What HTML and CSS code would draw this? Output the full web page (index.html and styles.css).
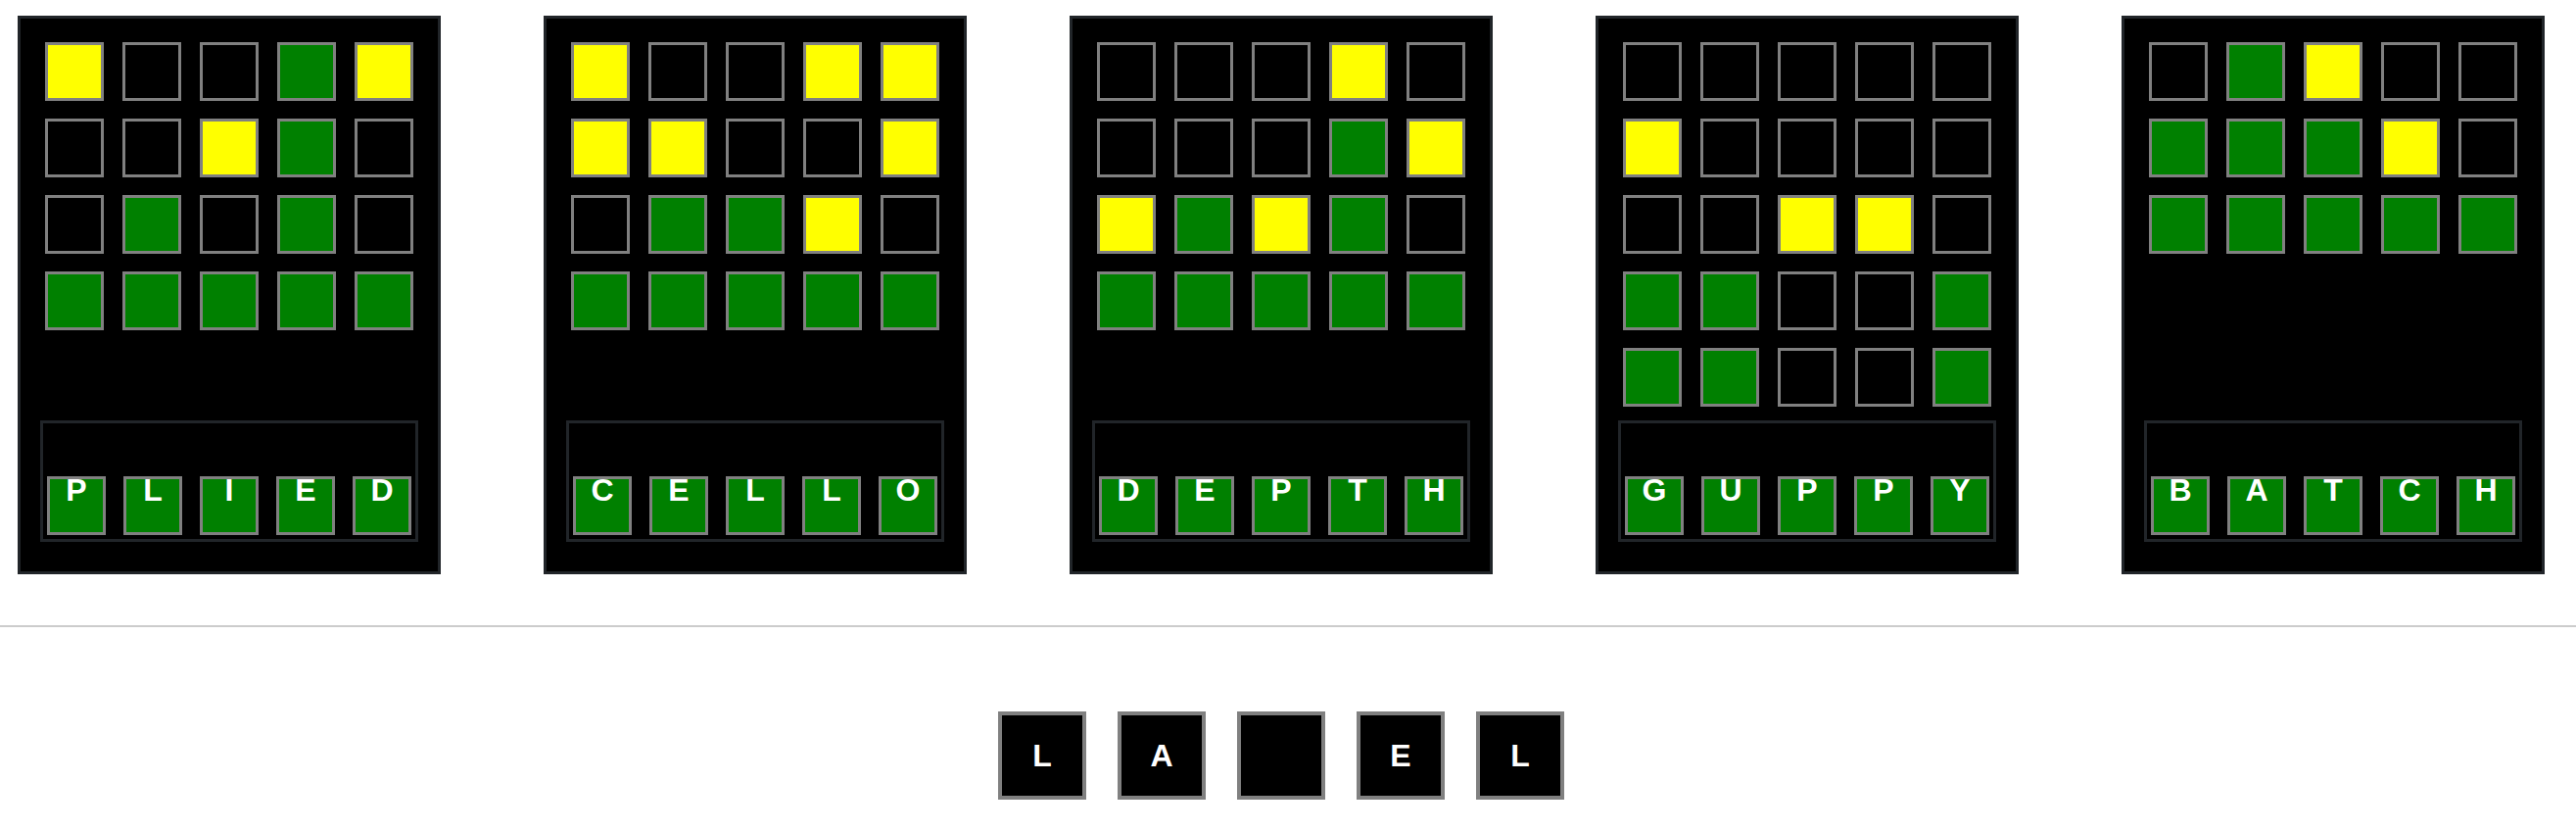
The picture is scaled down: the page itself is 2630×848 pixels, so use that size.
FILE: index.html
```html
<!DOCTYPE html>
<html>
<head>
<meta charset="utf-8">
<link rel="stylesheet" href="styles.css">
</head>
<body>
<div class="boards">
  <div class="card">
    <div class="guesses">
      <div class="row"><div class="tile y"></div><div class="tile"></div><div class="tile"></div><div class="tile g"></div><div class="tile y"></div></div>
      <div class="row"><div class="tile"></div><div class="tile"></div><div class="tile y"></div><div class="tile g"></div><div class="tile"></div></div>
      <div class="row"><div class="tile"></div><div class="tile g"></div><div class="tile"></div><div class="tile g"></div><div class="tile"></div></div>
      <div class="row"><div class="tile g"></div><div class="tile g"></div><div class="tile g"></div><div class="tile g"></div><div class="tile g"></div></div>
    </div>
    <div class="answer"><div class="atile">P</div><div class="atile">L</div><div class="atile">I</div><div class="atile">E</div><div class="atile">D</div></div>
  </div>
  <div class="card">
    <div class="guesses">
      <div class="row"><div class="tile y"></div><div class="tile"></div><div class="tile"></div><div class="tile y"></div><div class="tile y"></div></div>
      <div class="row"><div class="tile y"></div><div class="tile y"></div><div class="tile"></div><div class="tile"></div><div class="tile y"></div></div>
      <div class="row"><div class="tile"></div><div class="tile g"></div><div class="tile g"></div><div class="tile y"></div><div class="tile"></div></div>
      <div class="row"><div class="tile g"></div><div class="tile g"></div><div class="tile g"></div><div class="tile g"></div><div class="tile g"></div></div>
    </div>
    <div class="answer"><div class="atile">C</div><div class="atile">E</div><div class="atile">L</div><div class="atile">L</div><div class="atile">O</div></div>
  </div>
  <div class="card">
    <div class="guesses">
      <div class="row"><div class="tile"></div><div class="tile"></div><div class="tile"></div><div class="tile y"></div><div class="tile"></div></div>
      <div class="row"><div class="tile"></div><div class="tile"></div><div class="tile"></div><div class="tile g"></div><div class="tile y"></div></div>
      <div class="row"><div class="tile y"></div><div class="tile g"></div><div class="tile y"></div><div class="tile g"></div><div class="tile"></div></div>
      <div class="row"><div class="tile g"></div><div class="tile g"></div><div class="tile g"></div><div class="tile g"></div><div class="tile g"></div></div>
    </div>
    <div class="answer"><div class="atile">D</div><div class="atile">E</div><div class="atile">P</div><div class="atile">T</div><div class="atile">H</div></div>
  </div>
  <div class="card">
    <div class="guesses">
      <div class="row"><div class="tile"></div><div class="tile"></div><div class="tile"></div><div class="tile"></div><div class="tile"></div></div>
      <div class="row"><div class="tile y"></div><div class="tile"></div><div class="tile"></div><div class="tile"></div><div class="tile"></div></div>
      <div class="row"><div class="tile"></div><div class="tile"></div><div class="tile y"></div><div class="tile y"></div><div class="tile"></div></div>
      <div class="row"><div class="tile g"></div><div class="tile g"></div><div class="tile"></div><div class="tile"></div><div class="tile g"></div></div>
      <div class="row"><div class="tile g"></div><div class="tile g"></div><div class="tile"></div><div class="tile"></div><div class="tile g"></div></div>
    </div>
    <div class="answer"><div class="atile">G</div><div class="atile">U</div><div class="atile">P</div><div class="atile">P</div><div class="atile">Y</div></div>
  </div>
  <div class="card">
    <div class="guesses">
      <div class="row"><div class="tile"></div><div class="tile g"></div><div class="tile y"></div><div class="tile"></div><div class="tile"></div></div>
      <div class="row"><div class="tile g"></div><div class="tile g"></div><div class="tile g"></div><div class="tile y"></div><div class="tile"></div></div>
      <div class="row"><div class="tile g"></div><div class="tile g"></div><div class="tile g"></div><div class="tile g"></div><div class="tile g"></div></div>
    </div>
    <div class="answer"><div class="atile">B</div><div class="atile">A</div><div class="atile">T</div><div class="atile">C</div><div class="atile">H</div></div>
  </div>
</div>
<hr class="divider">
<div class="input-row">
  <div class="btile">L</div>
  <div class="btile">A</div>
  <div class="btile"></div>
  <div class="btile">E</div>
  <div class="btile">L</div>
</div>
</body>
</html>
```
FILE: styles.css
```css
html, body {
  margin: 0;
  padding: 0;
  background: #ffffff;
  font-family: "Liberation Sans", Arial, sans-serif;
}

.boards {
  display: flex;
  gap: 105px;
  padding: 16px 0 0 18px;
}

.card {
  width: 432px;
  height: 570px;
  box-sizing: border-box;
  border: 3px solid #212529;
  background: #000000;
  padding: 15px 15px 30px;
  display: flex;
  flex-direction: column;
}

.guesses {
  height: 395px;
  box-sizing: border-box;
  padding-top: 9px;
  display: flex;
  flex-direction: column;
  gap: 18px;
}

.row {
  display: flex;
  justify-content: space-around;
}

.tile {
  width: 60px;
  height: 60px;
  box-sizing: border-box;
  border: 3px solid #808080;
  background: #000000;
}

.tile.y { background: #ffff00; }
.tile.g { background: #008000; }

.answer {
  height: 124px;
  box-sizing: border-box;
  margin: 0 5px;
  border: 3px solid #212529;
  padding: 0 4px 4px;
  display: flex;
  align-items: flex-end;
  justify-content: space-between;
}

.atile {
  width: 60px;
  height: 60px;
  box-sizing: border-box;
  border: 3px solid #808080;
  background: #008000;
  color: #ffffff;
  font-weight: bold;
  font-size: 32px;
  line-height: 22px;
  text-align: center;
}

.divider {
  margin: 52px 0 0;
  border: none;
  border-top: 2px solid #cccccc;
  height: 0;
}

.input-row {
  display: flex;
  justify-content: center;
  gap: 32px;
  padding: 86px 14px 0 0;
}

.btile {
  width: 90px;
  height: 90px;
  box-sizing: border-box;
  border: 4px solid #808080;
  background: #000000;
  color: #ffffff;
  font-weight: bold;
  font-size: 32px;
  display: flex;
  align-items: center;
  justify-content: center;
}
```
